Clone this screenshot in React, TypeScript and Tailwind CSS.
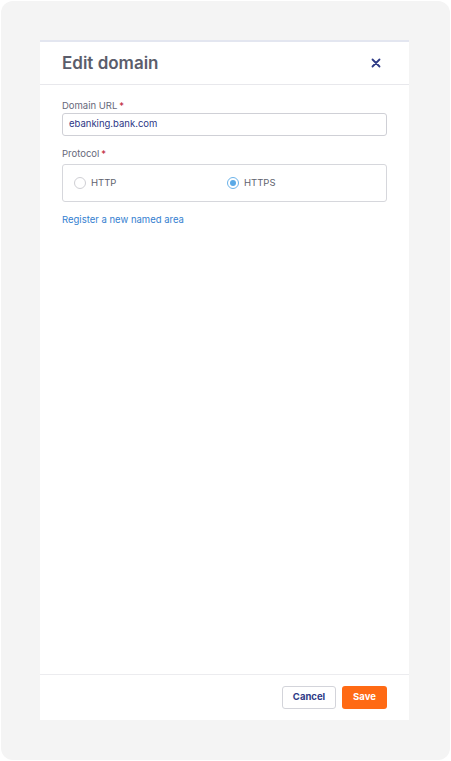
import React from "react";

function Radio({ checked, label }: { checked: boolean; label: string }) {
  return (
    <label className="flex items-center gap-[5px]">
      <span
        className={
          checked
            ? "flex h-[12px] w-[12px] items-center justify-center rounded-full border border-[#6bb3ea] bg-white"
            : "flex h-[12px] w-[12px] items-center justify-center rounded-full border border-[#cfcfd4] bg-white"
        }
      >
        {checked && <span className="h-[6px] w-[6px] rounded-full bg-[#5aa9e6]" />}
      </span>
      <span className="text-[9.5px] text-[#60626e]">{label}</span>
    </label>
  );
}

export default function App() {
  return (
    <div
      className="h-[761px] w-[451px] bg-white p-px"
      style={{ fontFamily: "Inter, 'Noto Sans', sans-serif" }}
    >
      <div className="flex h-full w-full rounded-[12px] bg-[#f4f4f4] pl-[39px] pt-[39px]">
        <div className="flex h-[680px] w-[369px] flex-col border-t-2 border-[#e3e6f0] bg-white">
          <div className="flex h-[43px] items-center justify-between border-b border-[#e8e8ec] pl-[22px] pr-[28px]">
            <h1 className="mt-[2px] text-[17px] font-semibold text-[#5b5d6b]">Edit domain</h1>
            <svg width="10" height="10" viewBox="0 0 10 10">
              <path d="M1.5 1.5 L8.5 8.5 M8.5 1.5 L1.5 8.5" stroke="#2e3a86" strokeWidth="1.8" strokeLinecap="round" />
            </svg>
          </div>
          <div className="flex-1 px-[22px] pt-[14px]">
            <div className="flex h-[14px] items-center text-[9.5px] text-[#66687a]">
              Domain URL<span className="ml-[2px] text-[#c0263a]">*</span>
            </div>
            <div className="flex h-[23px] items-center rounded-[3px] border border-[#cfd0d6] px-[6px] text-[9.5px] text-[#2d3786]">
              ebanking.bank.com
            </div>
            <div className="mt-[11px] flex h-[14px] items-center text-[9.5px] text-[#66687a]">
              Protocol<span className="ml-[2px] text-[#c0263a]">*</span>
            </div>
            <div className="mt-[3px] flex h-[38px] items-center rounded-[3px] border border-[#d6d7dc] pl-[11px]">
              <div className="w-[153px]">
                <Radio checked={false} label="HTTP" />
              </div>
              <Radio checked={true} label="HTTPS" />
            </div>
            <div className="mt-[11px] text-[9.5px] text-[#3480d0]">Register a new named area</div>
          </div>
          <div className="flex justify-end gap-[6px] border-t border-[#ececef] px-[22px] pb-[11px] pt-[11px]">
            <button className="h-[23px] w-[54px] rounded-[3px] border border-[#d3d4da] bg-white text-[9.5px] font-bold text-[#2e3a86]">
              Cancel
            </button>
            <button className="h-[23px] w-[45px] rounded-[3px] bg-[#ff6a14] text-[9.5px] font-bold text-white">
              Save
            </button>
          </div>
        </div>
      </div>
    </div>
  );
}
